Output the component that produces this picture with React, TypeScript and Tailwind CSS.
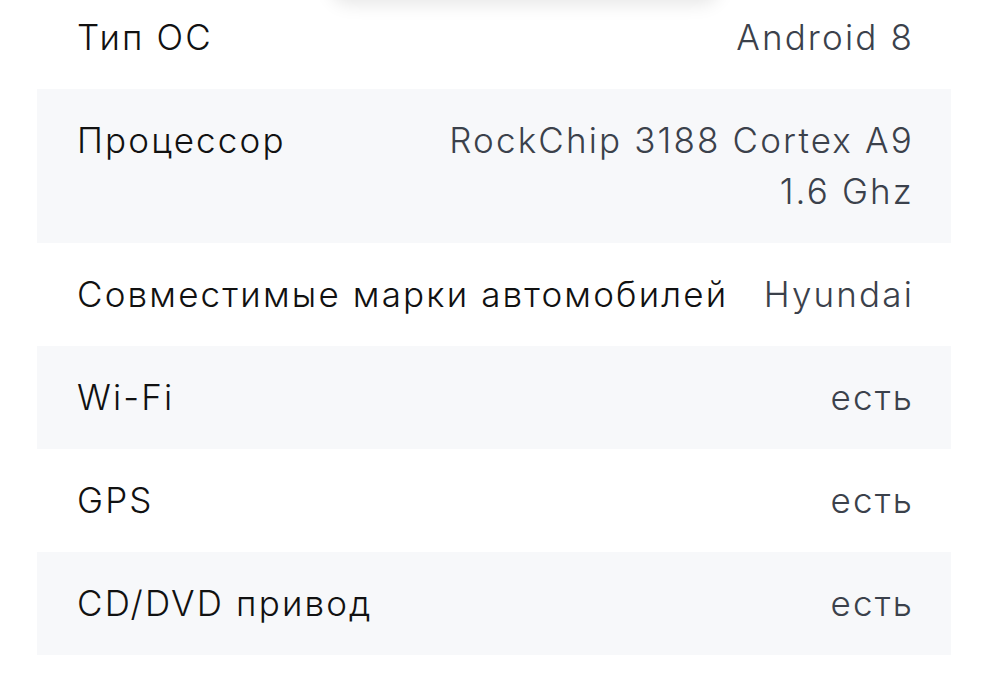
import React from "react";

const specs = [
  { label: "Тип ОС", value: "Android 8" },
  { label: "Процессор", value: "RockChip 3188 Cortex A9 1.6 Ghz" },
  { label: "Совместимые марки автомобилей", value: "Hyundai" },
  { label: "Wi-Fi", value: "есть" },
  { label: "GPS", value: "есть" },
  { label: "CD/DVD привод", value: "есть" },
];

const App = () => {
  return (
    <div
      className="relative w-[988px] h-[700px] overflow-hidden bg-white"
      style={{ fontFamily: "Inter, 'Noto Sans', sans-serif" }}
    >
      <div className="absolute left-[330px] top-[-40px] w-[390px] h-[40px] rounded-full bg-white shadow-[0_4px_18px_rgba(0,0,0,0.10)]" />
      <div className="mx-[37px] mt-[-14px]">
        {specs.map((s, i) => (
          <div
            key={s.label}
            className={`flex justify-between gap-8 pl-10 pr-[37px] py-[26px] text-[35px] leading-[51px] font-light tracking-[2.15px] ${
              i % 2 === 1 ? "bg-[#f7f8fa]" : "bg-white"
            }`}
          >
            <span className="shrink-0 whitespace-nowrap text-[#111111]">{s.label}</span>
            <span className="max-w-[470px] text-right text-[#3b414b]">{s.value}</span>
          </div>
        ))}
      </div>
    </div>
  );
};

export default App;
